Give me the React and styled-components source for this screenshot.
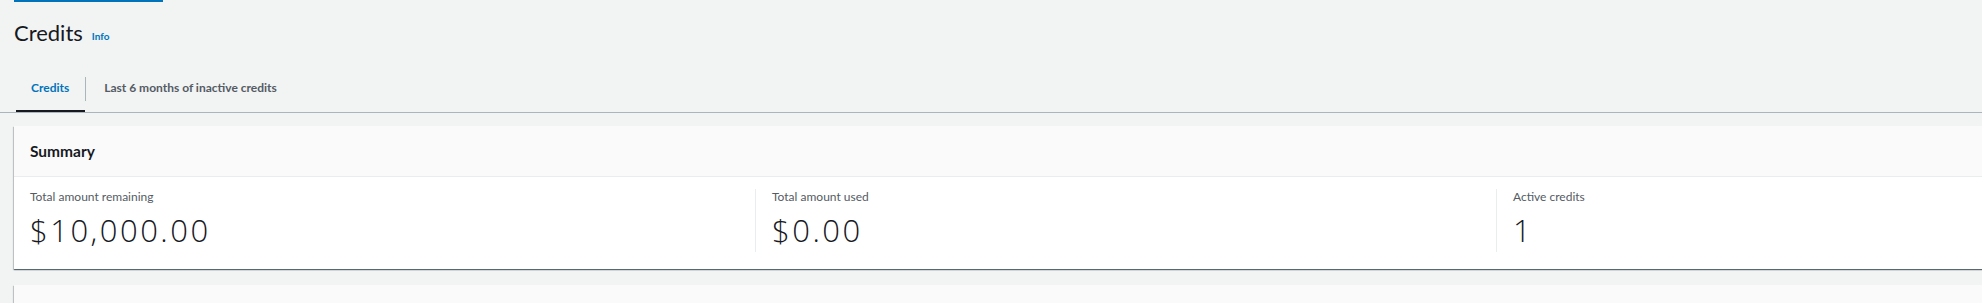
import React from 'react';
import styled, { createGlobalStyle } from 'styled-components';

const GlobalStyle = createGlobalStyle`
  html, body {
    margin: 0;
    padding: 0;
    background: #f2f3f3;
    overflow: hidden;
  }
  body {
    font-family: Lato, "Open Sans", "Liberation Sans", sans-serif;
    color: #16191f;
  }
`;

const Page = styled.div`
  width: 2240px;
  padding-left: 14px;
`;

const TopIndicator = styled.div`
  width: 149px;
  height: 2px;
  background: #0073bb;
`;

const TitleRow = styled.div`
  display: flex;
  align-items: baseline;
  gap: 9px;
  padding-top: 17px;
  height: 35px;
`;

const Title = styled.h1`
  margin: 0;
  font-size: 22px;
  line-height: 28px;
  font-weight: 400;
  color: #16191f;
`;

const InfoLink = styled.a`
  font-size: 10px;
  font-weight: 700;
  color: #0073bb;
  text-decoration: none;
  position: relative;
  top: -1px;
`;

const TabList = styled.div`
  display: flex;
  align-items: flex-start;
  margin-top: 23px;
  height: 35px;
  border-bottom: 1px solid #aab7b8;
  margin-left: -14px;
  padding-left: 16px;
`;

const Tab = styled.div`
  display: flex;
  align-items: center;
  height: 35px;
  box-sizing: border-box;
  padding: 0 ${(p) => (p.$first ? '16px' : '19px')} 14px ${(p) => (p.$first ? '15px' : '18px')};
  font-size: 12px;
  font-weight: 700;
  color: ${(p) => (p.$active ? '#0073bb' : '#545b64')};
  box-shadow: ${(p) => (p.$active ? 'inset 0 -2px 0 #16191f' : 'none')};
`;

const TabDivider = styled.div`
  width: 1px;
  height: 24px;
  background: #aab7b8;
`;

const Container = styled.section`
  margin-top: ${(p) => p.$gap || '13px'};
  background: #ffffff;
  box-shadow: 0 1px 1px 0 rgba(0, 28, 36, 0.5), 1px 1px 1px 0 rgba(0, 28, 36, 0.15),
    -1px 1px 1px 0 rgba(0, 28, 36, 0.15);
`;

const Header = styled.header`
  display: flex;
  align-items: center;
  height: 50px;
  padding-left: 16px;
  background: #fafafa;
  border-bottom: 1px solid #eaeded;
`;

const HeaderTitle = styled.h2`
  margin: 0;
  font-size: 15.5px;
  font-weight: 700;
  color: #16191f;
`;

const Body = styled.div`
  display: grid;
  grid-template-columns: repeat(3, 741px);
  padding: 12px 0 17px;
`;

const Stat = styled.div`
  padding-left: 16px;
  border-left: ${(p) => (p.$divider ? '1px solid #eaeded' : 'none')};
  height: 63px;
`;

const StatLabel = styled.div`
  font-size: 12px;
  line-height: 16px;
  color: #545b64;
`;

const StatValue = styled.div`
  margin-top: 7px;
  font-family: "Open Sans", Lato, sans-serif;
  font-size: 31px;
  font-weight: 300;
  letter-spacing: 2.5px;
  line-height: 36px;
  color: #16191f;
`;

const stats = [
  { label: 'Total amount remaining', value: '$10,000.00' },
  { label: 'Total amount used', value: '$0.00' },
  { label: 'Active credits', value: '1' },
];

export default function App() {
  return (
    <>
      <GlobalStyle />
      <Page>
        <TopIndicator />
        <TitleRow>
          <Title>Credits</Title>
          <InfoLink href="#">Info</InfoLink>
        </TitleRow>
        <TabList>
          <Tab $active $first>Credits</Tab>
          <TabDivider />
          <Tab>Last 6 months of inactive credits</Tab>
        </TabList>
        <Container>
          <Header>
            <HeaderTitle>Summary</HeaderTitle>
          </Header>
          <Body>
            {stats.map((s, i) => (
              <Stat key={s.label} $divider={i > 0}>
                <StatLabel>{s.label}</StatLabel>
                <StatValue>{s.value}</StatValue>
              </Stat>
            ))}
          </Body>
        </Container>
        <Container $gap="16px">
          <Header>
            <HeaderTitle>Credits</HeaderTitle>
          </Header>
        </Container>
      </Page>
    </>
  );
}
